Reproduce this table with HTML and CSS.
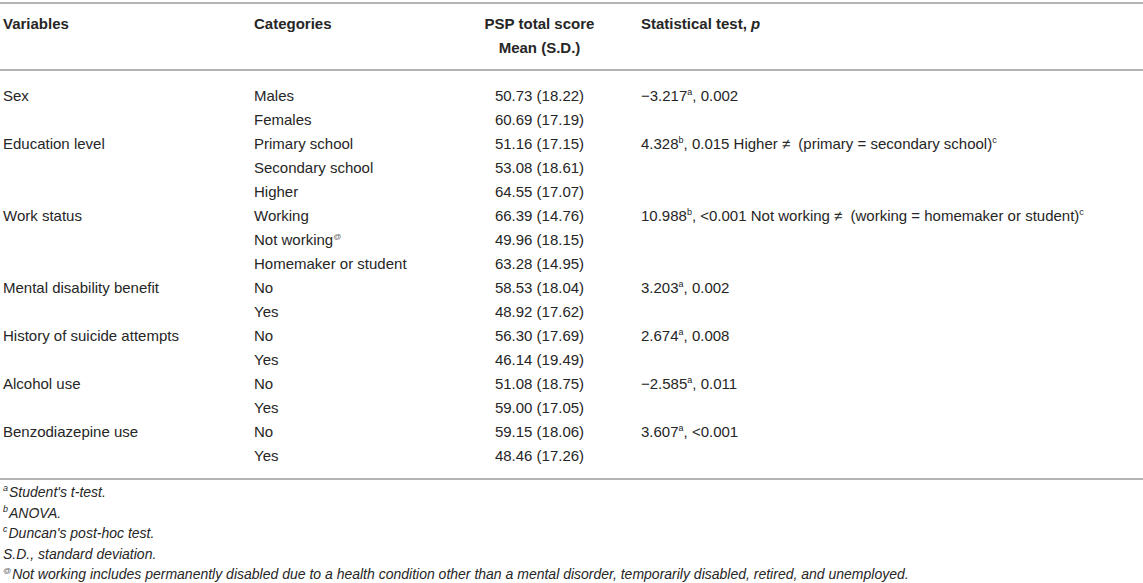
FILE: index.html
```html
<!doctype html>
<html>
  <head>
    <meta charset="UTF-8" />
    <link rel="stylesheet" href="styles.css">
  </head>
  <body>
    <table class="results">
      <colgroup>
        <col class="col-var" />
        <col class="col-cat" />
        <col class="col-score" />
        <col class="col-test" />
      </colgroup>
      <thead>
        <tr>
          <th>Variables</th>
          <th>Categories</th>
          <th class="center">PSP total score<br />Mean (S.D.)</th>
          <th>Statistical test, <i>p</i></th>
        </tr>
      </thead>
      <tbody>
        <tr class="first">
          <td>Sex</td>
          <td>Males</td>
          <td class="center">50.73 (18.22)</td>
          <td>&minus;3.217<sup>a</sup>, 0.002</td>
        </tr>
        <tr>
          <td></td>
          <td>Females</td>
          <td class="center">60.69 (17.19)</td>
          <td></td>
        </tr>
        <tr>
          <td>Education level</td>
          <td>Primary school</td>
          <td class="center">51.16 (17.15)</td>
          <td>4.328<sup>b</sup>, 0.015 Higher <span class="ne">&ne;</span> (primary = secondary school)<sup>c</sup></td>
        </tr>
        <tr>
          <td></td>
          <td>Secondary school</td>
          <td class="center">53.08 (18.61)</td>
          <td></td>
        </tr>
        <tr>
          <td></td>
          <td>Higher</td>
          <td class="center">64.55 (17.07)</td>
          <td></td>
        </tr>
        <tr>
          <td>Work status</td>
          <td>Working</td>
          <td class="center">66.39 (14.76)</td>
          <td>10.988<sup>b</sup>, &lt;0.001 Not working <span class="ne">&ne;</span> (working = homemaker or student)<sup>c</sup></td>
        </tr>
        <tr>
          <td></td>
          <td>Not working<sup class="at">@</sup></td>
          <td class="center">49.96 (18.15)</td>
          <td></td>
        </tr>
        <tr>
          <td></td>
          <td>Homemaker or student</td>
          <td class="center">63.28 (14.95)</td>
          <td></td>
        </tr>
        <tr>
          <td>Mental disability benefit</td>
          <td>No</td>
          <td class="center">58.53 (18.04)</td>
          <td>3.203<sup>a</sup>, 0.002</td>
        </tr>
        <tr>
          <td></td>
          <td>Yes</td>
          <td class="center">48.92 (17.62)</td>
          <td></td>
        </tr>
        <tr>
          <td>History of suicide attempts</td>
          <td>No</td>
          <td class="center">56.30 (17.69)</td>
          <td>2.674<sup>a</sup>, 0.008</td>
        </tr>
        <tr>
          <td></td>
          <td>Yes</td>
          <td class="center">46.14 (19.49)</td>
          <td></td>
        </tr>
        <tr>
          <td>Alcohol use</td>
          <td>No</td>
          <td class="center">51.08 (18.75)</td>
          <td>&minus;2.585<sup>a</sup>, 0.011</td>
        </tr>
        <tr>
          <td></td>
          <td>Yes</td>
          <td class="center">59.00 (17.05)</td>
          <td></td>
        </tr>
        <tr>
          <td>Benzodiazepine use</td>
          <td>No</td>
          <td class="center">59.15 (18.06)</td>
          <td>3.607<sup>a</sup>, &lt;0.001</td>
        </tr>
        <tr class="last">
          <td></td>
          <td>Yes</td>
          <td class="center">48.46 (17.26)</td>
          <td></td>
        </tr>
      </tbody>
    </table>
    <div class="notes">
      <p><sup>a</sup>Student's t-test.</p>
      <p><sup>b</sup>ANOVA.</p>
      <p><sup>c</sup>Duncan's post-hoc test.</p>
      <p>S.D., standard deviation.</p>
      <p><sup class="at">@</sup>Not working includes permanently disabled due to a health condition other than a mental disorder, temporarily disabled, retired, and unemployed.</p>
    </div>
  </body>
</html>
```

FILE: styles.css
```css
html,
body {
  margin: 0;
  background: white;
  color: #262626;
  font-family: "Liberation Sans", Arial, sans-serif;
}
.results {
  width: 100%;
  margin-top: 2px;
  border-collapse: collapse;
  table-layout: fixed;
  font-size: 15px;
  line-height: 24px;
}
.col-var {
  width: 251px;
}
.col-cat {
  width: 190px;
}
.col-score {
  width: 197px;
}
.results th,
.results td {
  padding: 0 3px;
  text-align: left;
  vertical-align: top;
  white-space: nowrap;
}
.results th {
  font-weight: bold;
  padding-top: 8px;
  padding-bottom: 9px;
}
.results thead tr {
  border-top: 2px solid #b4b4b4;
  border-bottom: 2px solid #b4b4b4;
}
.results tbody tr.first td {
  padding-top: 13px;
}
.results tbody tr.last td {
  padding-bottom: 10px;
}
.results tbody tr.last {
  border-bottom: 2px solid #b4b4b4;
}
.results .center {
  text-align: center;
}
.ne {
  margin-right: 4px;
}
sup {
  font-size: 9px;
  line-height: 0;
  vertical-align: 6px;
}
.at {
  font-size: 8px;
  color: #666;
}
.notes {
  padding: 2px 3px 0;
  font-size: 14px;
  font-style: italic;
  line-height: 20.5px;
}
.notes p {
  margin: 0;
}
.notes sup {
  margin-right: 1px;
}
```
